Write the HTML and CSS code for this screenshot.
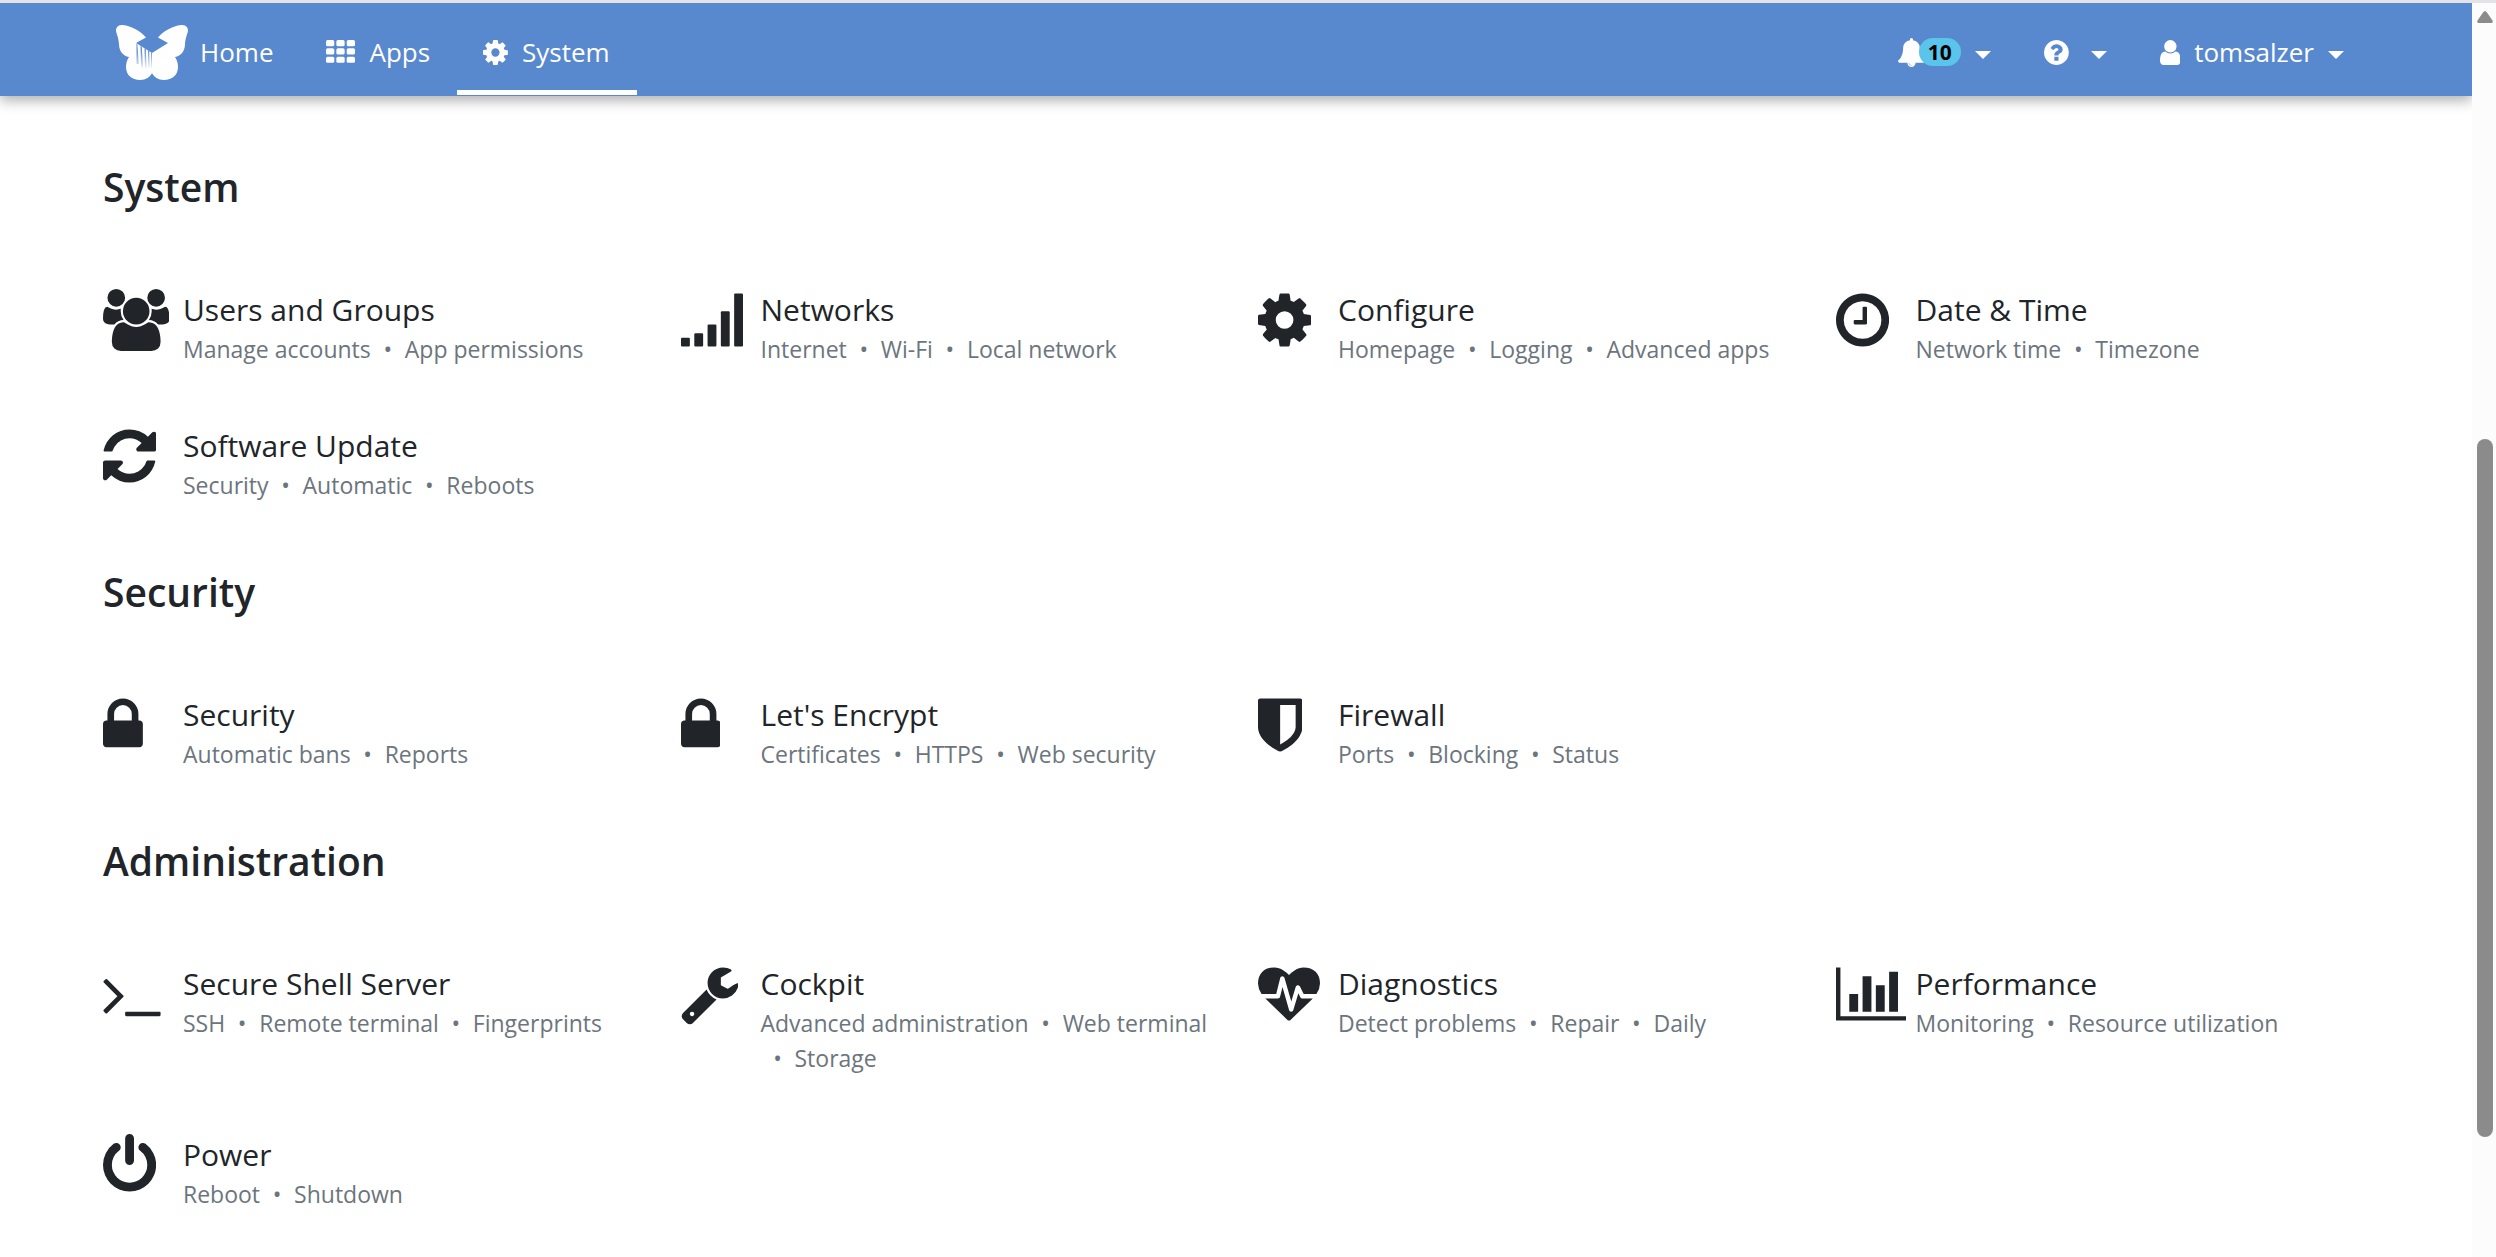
FILE: index.html
```html
<!doctype html>
<html lang="en">
  <head>
    <meta charset="utf-8">
    <title>System</title>
    <meta name="viewport" content="width=device-width, initial-scale=1">
    <link rel="stylesheet" href="styles.css">
  </head>
  <body>
    <div class="page">
      <header class="navbar">
        <nav class="nav">
          <a href="#home" class="nav-link home-link">
            <svg class="logo" viewBox="0 0 72 55" fill="currentColor">
              <defs>
                <linearGradient id="fade" x1="0" y1="17" x2="0" y2="45" gradientUnits="userSpaceOnUse">
                  <stop offset="0.3" stop-color="#5888ce" />
                  <stop offset="1" stop-color="#5888ce" stop-opacity="0" />
                </linearGradient>
              </defs>
              <path d="M0 6C0 1 3 0 7 0C15 1 25 6 30 12.500L20 18L36 28L52 18L42 12.500C47 6 57 1 65 0C69 0 72 1 72 6C71 10 69.500 13 69 19C69 26 65 31 59 32C61 35 62 38 62 42C62 50 56 55 48 55C42 55 38 52 36 48C34 52 30 55 24 55C16 55 10 50 10 42C10 38 11 35 13 32C7 31 3 26 3 19C2.500 13 1 10 0 6z" />
              <path fill="url(#fade)" d="M20.500 19l.8 0 1.500 20h-2.300zM24.500 21l1.200.5 1.500 21h-2zM28.500 23.500l1.200.5 1 19h-1.700zM32 25.500l1.200.7 .5 17h-1.300zM35 27.500l1 .5-.2 18h-1z" />
            </svg>
            Home
          </a>
          <a href="#apps" class="nav-link">
            <svg class="icon-sm" viewBox="0 0 1792 1792" fill="currentColor">
              <g id="th-row">
                <rect x="0" y="128" width="512" height="384" rx="96" />
                <rect x="640" y="128" width="512" height="384" rx="96" />
                <rect x="1280" y="128" width="512" height="384" rx="96" />
              </g>
              <use href="#th-row" y="512" />
              <use href="#th-row" y="1024" />
            </svg>
            Apps
          </a>
          <a href="#system" class="nav-link active">
            <svg class="icon-sm" viewBox="128 0 1536 1792" fill="currentColor"><use href="#cog" /></svg>
            System
          </a>
        </nav>
        <div class="nav">
          <button class="nav-link" aria-label="Notifications">
            <svg class="icon-sm" viewBox="64 0 1664 1792" fill="currentColor">
              <path d="M912 1696q0-16-16-16-59 0-101.500-42.500t-42.500-101.500q0-16-16-16t-16 16q0 73 51.500 124.500t124.500 51.500q16 0 16-16zm816-288q0 52-38 90t-90 38h-448q0 106-75 181t-181 75-181-75-75-181h-448q-52 0-90-38t-38-90q50-42 91-88t85-119.500 74.500-158.500 50-206 19.500-260q0-152 117-282.500t307-158.500q-8-19-8-39 0-40 28-68t68-28 68 28 28 68q0 20-8 39 190 28 307 158.500t117 282.500q0 139 19.500 260t50 206 74.500 158.500 85 119.500 91 88z" />
            </svg>
            <span class="badge">10</span>
            <span class="caret"></span>
          </button>
          <button class="nav-link" aria-label="Help">
            <svg class="icon-sm" viewBox="128 0 1536 1792" fill="currentColor">
              <path d="M1024 1376v-192q0-14-9-23t-23-9h-192q-14 0-23 9t-9 23v192q0 14 9 23t23 9h192q14 0 23-9t9-23zm256-672q0-88-55.500-163t-138.500-116-170-41q-243 0-371 213-15 24 8 42l132 100q7 6 19 6 16 0 25-12 53-68 86-92 34-24 86-24 48 0 85.500 26t37.500 59q0 38-20 61t-68 45q-63 28-115.500 86.500t-52.500 125.500v36q0 14 9 23t23 9h192q14 0 23-9t9-23q0-19 21.500-49.500t54.500-49.500q32-18 49-28.500t46-35 44.500-48 28-60.500 12.500-81zm384 192q0 209-103 385.500t-279.500 279.500-385.500 103-385.500-103-279.500-279.500-103-385.500 103-385.500 279.500-279.500 385.500-103 385.500 103 279.500 279.500 103 385.500z" />
            </svg>
            <span class="caret help-caret"></span>
          </button>
          <button class="nav-link">
            <svg class="icon-sm" viewBox="256 0 1280 1792" fill="currentColor">
              <path d="M1536 1399q0 109-62.500 187t-150.500 78h-854q-88 0-150.500-78t-62.500-187q0-85 8.500-160.500t31.500-152 58.500-131 94-89 134.500-34.500q131 128 313 128t313-128q76 0 134.500 34.500t94 89 58.500 131 31.500 152 8.500 160.500zm-256-887q0 159-112.500 271.500t-271.500 112.500-271.500-112.500-112.500-271.500 112.500-271.500 271.500-112.500 271.500 112.500 112.500 271.500z" />
            </svg>
            tomsalzer
            <span class="caret"></span>
          </button>
        </div>
      </header>

      <main class="content">
        <section class="group">
          <h2>System</h2>
          <div class="shortcuts">
            <a href="#users" class="shortcut">
              <svg class="icon" viewBox="-64 0 1920 1792" fill="currentColor">
                <path d="M529 896q-162 5-265 128h-134q-82 0-138-40.500t-56-118.500q0-353 124-353 6 0 43.500 21t97.500 42.500 119 21.500q67 0 133-23-5 37-5 66 0 139 81 256zm1071 637q0 120-73 189.500t-194 69.500h-874q-121 0-194-69.500t-73-189.500q0-53 3.500-103.500t14-109 26.500-108.500 43-97.500 62-81 85.500-53.500 111.500-20q10 0 43 21.500t73 48 107 48 135 21.500 135-21.500 107-48 73-48 43-21.500q61 0 111.500 20t85.500 53.500 62 81 43 97.500 26.500 108.500 14 109 3.500 103.500zm-1024-1277q0 106-75 181t-181 75-181-75-75-181 75-181 181-75 181 75 75 181zm704 384q0 159-112.500 271.500t-271.500 112.500-271.500-112.500-112.500-271.500 112.500-271.500 271.500-112.500 271.500 112.500 112.500 271.500zm576 225q0 78-56 118.500t-138 40.500h-134q-103-123-265-128 81-117 81-256 0-29-5-66 66 23 133 23 59 0 119-21.500t97.500-42.500 43.500-21q124 0 124 353zm-128-609q0 106-75 181t-181 75-181-75-75-181 75-181 181-75 181 75 75 181z" />
              </svg>
              <div class="label">
                <h3>Users and Groups</h3>
                <ul class="tags"><li>Manage accounts</li><li>App permissions</li></ul>
              </div>
            </a>
            <a href="#networks" class="shortcut">
              <svg class="icon" viewBox="0 0 1792 1792" fill="currentColor">
                <rect x="0" y="1408" width="256" height="256" rx="32" />
                <rect x="384" y="1280" width="256" height="384" rx="32" />
                <rect x="768" y="1024" width="256" height="640" rx="32" />
                <rect x="1152" y="640" width="256" height="1024" rx="32" />
                <rect x="1536" y="128" width="256" height="1536" rx="32" />
              </svg>
              <div class="label">
                <h3>Networks</h3>
                <ul class="tags"><li>Internet</li><li>Wi-Fi</li><li>Local network</li></ul>
              </div>
            </a>
            <a href="#configure" class="shortcut">
              <svg class="icon" viewBox="128 0 1536 1792" fill="currentColor">
                <path id="cog" d="M1152 896q0-106-75-181t-181-75-181 75-75 181 75 181 181 75 181-75 75-181zm512-109v222q0 12-8 23t-20 13l-185 28q-19 54-39 91 35 50 107 138 10 12 10 25t-9 23q-27 37-99 108t-94 71q-12 0-26-9l-138-108q-44 23-91 38-16 136-29 186-7 28-36 28h-222q-14 0-24.500-8.500t-11.500-21.500l-28-184q-49-16-90-37l-141 107q-10 9-25 9-14 0-25-11-126-114-165-168-7-10-7-23 0-12 8-23 15-21 51-66.500t54-70.500q-27-50-41-99l-183-27q-13-2-21-12.500t-8-23.500v-222q0-12 8-23t19-13l186-28q14-46 39-92-40-57-107-138-10-12-10-24 0-10 9-23 26-36 98.500-107.500t94.500-71.500q13 0 26 10l138 107q44-23 91-38 16-136 29-186 7-28 36-28h222q14 0 24.500 8.500t11.500 21.500l28 184q49 16 90 37l142-107q9-9 24-9 13 0 25 10 129 119 165 170 7 8 7 22 0 12-8 23-15 21-51 66.500t-54 70.500q26 50 41 98l183 28q13 2 21 12.500t8 23.500z" />
              </svg>
              <div class="label">
                <h3>Configure</h3>
                <ul class="tags"><li>Homepage</li><li>Logging</li><li>Advanced apps</li></ul>
              </div>
            </a>
            <a href="#datetime" class="shortcut">
              <svg class="icon" viewBox="128 0 1536 1792" fill="currentColor">
                <path d="M1024 544v448q0 14-9 23t-23 9h-320q-14 0-23-9t-9-23v-64q0-14 9-23t23-9h224v-352q0-14 9-23t23-9h64q14 0 23 9t9 23zm416 352q0-148-73-273t-198-198-273-73-273 73-198 198-73 273 73 273 198 198 273 73 273-73 198-198 73-273zm224 0q0 209-103 385.500t-279.500 279.500-385.500 103-385.500-103-279.500-279.500-103-385.500 103-385.500 279.500-279.500 385.500-103 385.500 103 279.500 279.500 103 385.500z" />
              </svg>
              <div class="label">
                <h3>Date &amp; Time</h3>
                <ul class="tags"><li>Network time</li><li>Timezone</li></ul>
              </div>
            </a>
            <a href="#upgrades" class="shortcut">
              <svg class="icon" viewBox="128 0 1536 1792" fill="currentColor">
                <path d="M1639 1056q0 5-1 7-64 268-268 434.500t-478 166.500q-146 0-282.500-55t-243.500-157l-129 129q-19 19-45 19t-45-19-19-45v-448q0-26 19-45t45-19h448q26 0 45 19t19 45-19 45l-137 137q71 66 161 102t187 36q134 0 250-65t186-179q11-17 53-117 8-23 30-23h192q13 0 22.500 9.500t9.500 22.500zm25-800v448q0 26-19 45t-45 19h-448q-26 0-45-19t-19-45 19-45l138-138q-148-137-349-137-134 0-250 65t-186 179q-11 17-53 117-8 23-30 23h-199q-13 0-22.500-9.500t-9.500-22.500v-7q65-268 270-434.500t480-166.500q146 0 284 55.500t245 156.500l130-129q19-19 45-19t45 19 19 45z" />
              </svg>
              <div class="label">
                <h3>Software Update</h3>
                <ul class="tags"><li>Security</li><li>Automatic</li><li>Reboots</li></ul>
              </div>
            </a>
          </div>
        </section>

        <section class="group">
          <h2>Security</h2>
          <div class="shortcuts">
            <a href="#security" class="shortcut">
              <svg class="icon" viewBox="320 0 1152 1792" fill="currentColor">
                <path id="lock" d="M640 768h512v-192q0-106-75-181t-181-75-181 75-75 181v192zm832 96v576q0 40-28 68t-68 28h-960q-40 0-68-28t-28-68v-576q0-40 28-68t68-28h32v-192q0-184 132-316t316-132 316 132 132 316v192h32q40 0 68 28t28 68z" />
              </svg>
              <div class="label">
                <h3>Security</h3>
                <ul class="tags"><li>Automatic bans</li><li>Reports</li></ul>
              </div>
            </a>
            <a href="#letsencrypt" class="shortcut">
              <svg class="icon" viewBox="320 0 1152 1792" fill="currentColor"><use href="#lock" /></svg>
              <div class="label">
                <h3>Let's Encrypt</h3>
                <ul class="tags"><li>Certificates</li><li>HTTPS</li><li>Web security</li></ul>
              </div>
            </a>
            <a href="#firewall" class="shortcut">
              <svg class="icon" viewBox="256 0 1280 1792" fill="currentColor">
                <path d="M1344 960v-640h-448v1137q119-63 213-137 235-184 235-360zm192-768v768q0 86-33.500 170.500t-83 150-118 127.500-126.500 103-121 77.500-89.500 49.500-42.500 20q-12 6-26 6t-26-6q-16-7-42.500-20t-89.500-49.500-121-77.500-126.500-103-118-127.500-83-150-33.500-170.500v-768q0-26 19-45t45-19h1152q26 0 45 19t19 45z" />
              </svg>
              <div class="label">
                <h3>Firewall</h3>
                <ul class="tags"><li>Ports</li><li>Blocking</li><li>Status</li></ul>
              </div>
            </a>
          </div>
        </section>

        <section class="group">
          <h2>Administration</h2>
          <div class="shortcuts">
            <a href="#ssh" class="shortcut">
              <svg class="icon" viewBox="64 0 1664 1792" fill="currentColor">
                <path d="M649 983l-466 466q-10 10-23 10t-23-10l-50-50q-10-10-10-23t10-23l393-393-393-393q-10-10-10-23t10-23l50-50q10-10 23-10t23 10l466 466q10 10 10 23t-10 23zm1079 457v64q0 14-9 23t-23 9h-960q-14 0-23-9t-9-23v-64q0-14 9-23t23-9h960q14 0 23 9t9 23z" />
              </svg>
              <div class="label">
                <h3>Secure Shell Server</h3>
                <ul class="tags"><li>SSH</li><li>Remote terminal</li><li>Fingerprints</li></ul>
              </div>
            </a>
            <a href="#cockpit" class="shortcut">
              <svg class="icon" viewBox="64 0 1664 1792" fill="currentColor">
                <path d="M448 1472q0-26-19-45t-45-19-45 19-19 45 19 45 45 19 45-19 19-45zm644-420l-682 682q-37 37-90 37-52 0-91-37l-106-108q-38-36-38-90 0-53 38-91l681-681q39 98 114.500 173.500t173.500 114.500zm634-435q0 39-23 106-47 134-164.500 217.500t-258.500 83.500q-185 0-316.500-131.500t-131.500-316.500 131.500-316.500 316.500-131.500q58 0 121.500 16.500t107.500 46.500q16 11 16 28t-16 28l-293 169v224l193 107q5-3 79-48.500t135.500-81 70.500-35.500q15 0 23.500 10t8.500 25z" />
              </svg>
              <div class="label">
                <h3>Cockpit</h3>
                <ul class="tags"><li>Advanced administration</li><li>Web terminal</li><li>Storage</li></ul>
              </div>
            </a>
            <a href="#diagnostics" class="shortcut">
              <svg class="icon" viewBox="0 0 1792 1792" fill="currentColor">
                <path d="M1280 1024h305q-5 6-10 10.500t-9 7.500l-3 4-623 600q-18 18-44 18t-44-18l-624-602q-5-2-21-20h369q22 0 39.500-13.500t22.500-34.500l70-281 190 667q6 20 23 33t39 13q21 0 38-13t23-33l146-485 56 112q18 35 57 35zm512-428q0 145-103 300h-369l-111-221q-8-17-25.500-27t-36.500-8q-45 5-56 46l-129 430-196-686q-6-20-23.500-33t-39.500-13-39 13.500-22 34.500l-116 464h-423q-103-155-103-300 0-220 127-344t351-124q62 0 126.500 21.500t120 58 95.500 68.500 76 68q36-36 76-68t95.500-68.500 120-58 126.500-21.500q224 0 351 124t127 344z" />
              </svg>
              <div class="label">
                <h3>Diagnostics</h3>
                <ul class="tags"><li>Detect problems</li><li>Repair</li><li>Daily</li></ul>
              </div>
            </a>
            <a href="#performance" class="shortcut">
              <svg class="icon" viewBox="0 0 2048 1792" fill="currentColor">
                <path d="M640 896v512h-256v-512h256zm384-512v1024h-256v-1024h256zm1024 1152v128h-2048v-1536h128v1408h1920zm-640-896v768h-256v-768h256zm384-384v1152h-256v-1152h256z" />
              </svg>
              <div class="label">
                <h3>Performance</h3>
                <ul class="tags"><li>Monitoring</li><li>Resource utilization</li></ul>
              </div>
            </a>
            <a href="#power" class="shortcut">
              <svg class="icon" viewBox="128 0 1536 1792" fill="currentColor">
                <path d="M1664 896q0 156-61 298t-164 245-245 164-298 61-298-61-245-164-164-245-61-298q0-182 80.500-343t226.500-270q43-32 95.500-25t83.500 50q32 42 24.500 94.500t-49.500 84.500q-98 74-151.500 181t-53.500 228q0 104 40.500 198.500t109.500 163.500 163.500 109.500 198.500 40.500 198.500-40.500 163.500-109.500 109.500-163.500 40.500-198.500q0-121-53.500-228t-151.500-181q-42-32-49.500-84.500t24.500-94.500q31-43 84-50t95 25q146 109 226.500 270t80.500 343zm-640-768v640q0 52-38 90t-90 38-90-38-38-90v-640q0-52 38-90t90-38 90 38 38 90z" />
              </svg>
              <div class="label">
                <h3>Power</h3>
                <ul class="tags"><li>Reboot</li><li>Shutdown</li></ul>
              </div>
            </a>
          </div>
        </section>
      </main>
    </div>
    <div class="scrollbar">
      <svg class="scroll-up" viewBox="0 0 16 12"><path d="M6 1.500Q8-1.500 10 1.500L15.500 9.500Q16.500 12 14 12H2Q-.5 12 .5 9.500z" fill="#8b8b8b" /></svg>
      <div class="scroll-thumb"></div>
    </div>
  </body>
</html>
```
FILE: styles.css
```css
* {
  margin: 0;
  padding: 0;

  box-sizing: border-box;
}

html, body {
  height: 100%;
  overflow: hidden;
}

body {
  display: flex;

  border-top: 3px solid #e3e3e7;

  background-color: #fff;
  color: #212529;
  font-family: "Segoe UI", "Open Sans", "Noto Sans", sans-serif;
}

a {
  color: inherit;
  text-decoration: none;
}

.page {
  flex: 1;
  overflow: hidden;
}

/* navbar */

.navbar {
  display: flex;
  justify-content: space-between;

  height: 93px;
  padding: 0 101px 1px 90px;

  background-color: #5888ce;
  color: #fff;
  box-shadow: 0 5px 12px rgba(0, 0, 0, 0.3);
}

.nav {
  display: flex;
}

.nav-link {
  display: flex;
  align-items: center;
  gap: 14px;

  padding: 11px 27px 0 26px;

  border: none;
  border-bottom: 5px solid transparent;
  background: none;

  color: inherit;
  font-family: inherit;
  font-size: 26px;
  line-height: 36px;
}

.nav-link.active {
  border-bottom-color: #fff;
}

.home-link {
  gap: 12px;
}

.logo {
  width: 72px;
  height: 55px;
}

.icon-sm {
  height: 29px;
}

.badge {
  margin-left: -20px;
  padding: 0 9px;

  border-radius: 14px;
  background-color: #5bc4eb;

  color: #000;
  font-size: 21px;
  font-weight: 700;
  line-height: 28px;
}

.caret {
  margin-top: 6px;

  border: 8px solid transparent;
  border-top-color: #fff;
  border-bottom: none;
}

.help-caret {
  margin-left: 8px;
}

/* shortcuts */

.content {
  padding: 66px 103px 0;
}

.group {
  margin-bottom: 64px;
}

h2 {
  margin-bottom: 76px;

  font-size: 39px;
  font-weight: 600;
  line-height: 50px;
}

.shortcuts {
  display: grid;
  grid-template-columns: repeat(4, 1fr);
  gap: 57px 44px;
}

.shortcut {
  position: relative;
  padding-left: 80px;
}

.icon {
  position: absolute;
  top: 1px;
  left: 0;

  height: 62px;
}

h3 {
  font-size: 30px;
  font-weight: 400;
  line-height: 44px;
}

.tags {
  color: #6c757d;
  font-size: 23px;
  line-height: 35px;
  list-style: none;
}

.tags li {
  display: inline-block;
}

.tags li + li::before {
  content: "•";
  display: inline-block;
  width: 34px;

  text-align: center;
}

/* scrollbar */

.scrollbar {
  width: 24px;
  padding: 8px 3px 0 5px;

  background-color: #fcfcfc;
}

.scroll-up {
  display: block;
  width: 16px;
  height: 12px;
}

.scroll-thumb {
  height: 56%;
  margin-top: 416px;

  border-radius: 8px;
  background-color: #8b8b8b;
}
```
